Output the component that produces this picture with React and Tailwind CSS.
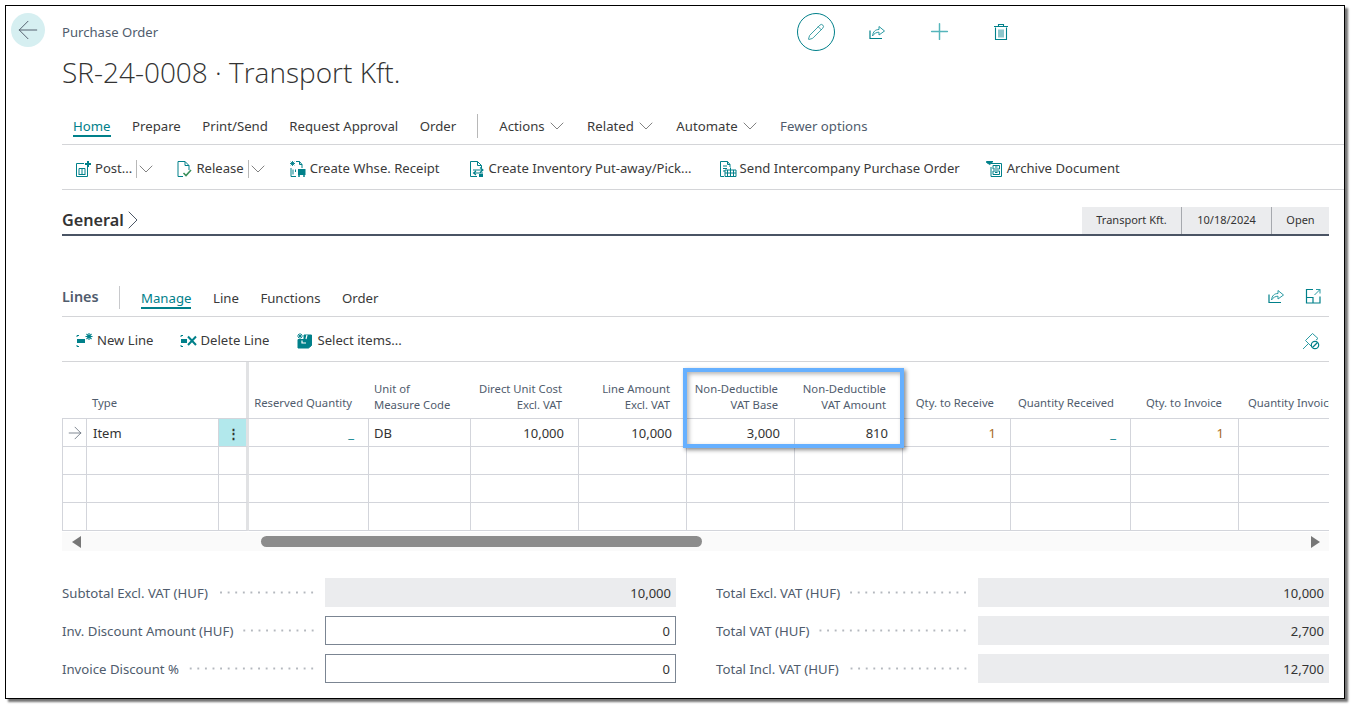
import { ChevronDown, ChevronRight, ArrowLeft, ArrowRight, Plus, Pencil } from 'lucide-react'

const teal = '#00808a'

// 18x18 hand drawn toolbar icons
const Svg = ({ size = 18, children }) => (
  <svg width={size} height={size} viewBox="0 0 18 18" fill="none" stroke={teal} strokeWidth="1" className="shrink-0">
    {children}
  </svg>
)

const PostIcon = () => (
  <Svg>
    <path d="M10 3.5H2.5V16.5H13.5V7" />
    <path d="M5 8.5V14M8 8.5V14M11 8.5V14M5 8.5H11M4.5 14.5H11.5" />
    <path d="M14 1V7M11 4H17" strokeWidth="2" />
  </Svg>
)
const ReleaseIcon = () => (
  <Svg>
    <path d="M3 16.5V1.5H10L14 5.5V10M10 1.5V5.5H14M3 16.5H8" />
    <path d="M8.5 13L11 15.5L16 10" strokeWidth="1.6" stroke="#3a8f5a" />
  </Svg>
)
const WhseIcon = () => (
  <Svg>
    <path d="M3.5 1V6M1 3.5H6M1.7 1.7L5.3 5.3M5.3 1.7L1.7 5.3" strokeWidth="0.9" />
    <path d="M7 1.5H10.5L13 4.5V8M10.5 1.5V4.5H13M2 8V16.5H7" />
    <path d="M4 9.5V14.5M6.5 9.5V12" />
    <rect x="9" y="9" width="7.5" height="6" fill={teal} stroke="none" />
    <circle cx="10" cy="16" r="1" fill={teal} stroke="none" />
    <circle cx="15" cy="16" r="1" fill={teal} stroke="none" />
  </Svg>
)
const InventoryIcon = () => (
  <Svg>
    <path d="M2.5 16.5V1.5H9.5L13.5 5.5V8M9.5 1.5V5.5H13.5M2.5 16.5H9" />
    <path d="M5 10H15M12 7.5L15 10L12 12.5M15 13H6M8 11L5.5 13L8 15" strokeWidth="1.1" />
    <rect x="11" y="14" width="4" height="3" fill={teal} stroke="none" />
  </Svg>
)
const IntercompanyIcon = () => (
  <Svg>
    <path d="M1.5 16.5V1.5H8.5L11 4.5V7M8.5 1.5V4.5H11M1.5 16.5H5" />
    <path d="M4 6H8M4 8.5H8M4 11H6" />
    <path d="M6 16.5V10H17V16.5Z M8.5 10V16.5M11.5 7.5V16.5M14.5 10V16.5M6 13H17" />
  </Svg>
)
const ArchiveIcon = () => (
  <Svg>
    <path d="M5 3.5H15.5V16.5H5V7" />
    <path d="M7 5.5H13.5V9H7ZM7 11H13.5V14.5H7Z" />
    <path d="M9 7H11.5M9 12.5H11.5" />
    <path d="M0.5 1.5H7L3.8 4.5L0.5 2.5Z" fill={teal} stroke={teal} />
  </Svg>
)
const NewLineIcon = () => (
  <Svg>
    <path d="M1 5V3.5H3M1 13V14.5H3" />
    <rect x="1" y="7" width="8" height="4" fill={teal} stroke="none" />
    <path d="M13 1V8M9.5 4.5H16.5M10.5 2L15.5 7M15.5 2L10.5 7" strokeWidth="1.1" />
  </Svg>
)
const DeleteLineIcon = () => (
  <Svg>
    <path d="M1 5V3.5H3M1 13V14.5H3" />
    <rect x="1" y="7" width="6" height="4" fill={teal} stroke="none" />
    <path d="M8 4.5L16 13M16 4.5L8 13" strokeWidth="2" />
  </Svg>
)
const SelectIcon = () => (
  <Svg>
    <path d="M2 7.5H8V3H15.5V13.5L12.5 16H2Z" fill={teal} />
    <path d="M6 8.5V11H10" stroke="#fff" strokeWidth="1.2" />
    <path d="M11 3L10 7" stroke="#fff" strokeWidth="1.2" />
    <path d="M4 1V7M1 4H7M2 2L6 6M6 2L2 6" strokeWidth="0.9" />
  </Svg>
)
const ShareIcon = ({ size = 18 }) => (
  <Svg size={size}>
    <path d="M2 7.5V15.5H14" strokeWidth="1.2" />
    <path d="M4.5 13C5 8.5 7.5 6.5 11 6.5V3.5L16.5 8L11 12V9.2C8.5 9.2 6 10.5 4.5 13Z" stroke="#2a9aa3" />
  </Svg>
)
const TrashIcon = () => (
  <Svg>
    <path d="M3.5 4.5V16.5H14.5V4.5M2 3.5H16M6.5 3.5V1.5H11.5V3.5" strokeWidth="1.1" />
    <path d="M7 6.5V14.5M9 6.5V14.5M11 6.5V14.5" strokeWidth="0.9" />
  </Svg>
)
const ExpandIcon = () => (
  <Svg>
    <path d="M9 2.5H2.5V16H16V9.5" strokeWidth="1.2" />
    <path d="M2.5 10.5H9V16" strokeWidth="1.2" />
    <path d="M10.5 8L16 2.5M12 2.5H16V6.5" stroke="#2a9aa3" />
  </Svg>
)
const PinIcon = () => (
  <Svg>
    <path d="M1 17L6 12M3.5 8.5L10 2L10.5 1.5L16 6.5L14 8" stroke="#2a9aa3" />
    <path d="M3.5 8.5L9 14" stroke="#2a9aa3" />
    <circle cx="13" cy="13" r="3.7" strokeWidth="1.2" />
    <path d="M10.5 15.5L15.5 10.5" strokeWidth="1.2" />
  </Svg>
)

const Tab = ({ children, active }) => (
  <div className={`h-[22px] leading-[23px] text-[13.2px] ${active ? 'text-[#00808a] border-b-2 border-[#00808a]' : 'text-[#3a3a3a]'}`}>
    {children}
  </div>
)

const MenuTab = ({ children }) => (
  <div className="flex items-center h-[22px] text-[13.2px] text-[#3a3a3a] leading-[23px]">
    {children}
    <ChevronDown size={24} strokeWidth={0.85} className="text-[#6b6b6b]" />
  </div>
)

const ToolButton = ({ icon, children, className = '' }) => (
  <div className={`flex items-center gap-[3px] text-[#3a3a3a] ${className}`}>
    {icon}
    <span>{children}</span>
  </div>
)

const Splitter = () => (
  <div className="flex items-center">
    <div className="w-px h-[18px] bg-[#b8b8b8] ml-[4px] -mr-[3px]" />
    <ChevronDown size={24} strokeWidth={0.85} className="text-[#6b6b6b]" />
  </div>
)

const gridCols =
  'grid grid-cols-[25px_132px_30px_120px_102px_108px_108px_108px_108px_108px_120px_108px_90px]'

const headers = [
  { text: '', cls: '' },
  { text: 'Type', cls: 'pl-[5px]' },
  { text: '', cls: 'border-r-[3px] border-[#e1e2e4]' },
  { text: 'Reserved Quantity', cls: 'justify-end text-right pr-[17px]' },
  { text: 'Unit of\nMeasure Code', cls: 'pl-[5px]' },
  { text: 'Direct Unit Cost\nExcl. VAT', cls: 'justify-end text-right pr-[17px]' },
  { text: 'Line Amount\nExcl. VAT', cls: 'justify-end text-right pr-[17px]' },
  { text: 'Non-Deductible\nVAT Base', cls: 'justify-end text-right pr-[17px]' },
  { text: 'Non-Deductible\nVAT Amount', cls: 'justify-end text-right pr-[17px]' },
  { text: 'Qty. to Receive', cls: 'justify-end text-right pr-[17px]' },
  { text: 'Quantity Received', cls: 'justify-end text-right pr-[17px]' },
  { text: 'Qty. to Invoice', cls: 'justify-end text-right pr-[17px]' },
  { text: 'Quantity Invoiced', cls: 'pl-[9px] overflow-hidden' },
]

const cellBase = 'h-[28px] border-r border-b border-[#d3d5db] flex items-center px-[6px] pt-[2px] text-[13px] text-[#333]'

const DataRow = ({ first }) => {
  const v = (value, extra = '') => (first ? <span className={extra}>{value}</span> : null)
  return (
    <div className={`${gridCols} h-[28px]`}>
      <div className={`${cellBase} border-l justify-center !px-0 !pt-0`}>
        {first && <ArrowRight size={20} strokeWidth={0.85} className="text-[#4d5866]" />}
      </div>
      <div className={cellBase}>{v('Item')}</div>
      <div className={`${cellBase} justify-center !px-0 !pl-[1px] border-r-[3px] !border-r-[#e1e2e4] ${first ? 'bg-[#b2e8ec]' : ''}`}>
        {first && <span className="font-bold leading-none">⋮</span>}
      </div>
      <div className={`${cellBase} justify-end !pr-[14px]`}>{v('_', 'text-[#00808a]')}</div>
      <div className={`${cellBase} !pl-[5px]`}>{v('DB')}</div>
      <div className={`${cellBase} justify-end !pr-[14px]`}>{v('10,000')}</div>
      <div className={`${cellBase} justify-end !pr-[14px]`}>{v('10,000')}</div>
      <div className={`${cellBase} justify-end !pr-[14px]`}>{v('3,000')}</div>
      <div className={`${cellBase} justify-end !pr-[14px]`}>{v('810')}</div>
      <div className={`${cellBase} justify-end !pr-[14px]`}>{v('1', 'text-[#a86a1a]')}</div>
      <div className={`${cellBase} justify-end !pr-[14px]`}>{v('_', 'text-[#00808a]')}</div>
      <div className={`${cellBase} justify-end !pr-[14px]`}>{v('1', 'text-[#a86a1a]')}</div>
      <div className={`${cellBase} !border-r-0`} />
    </div>
  )
}

const Total = ({ label, value, input }) => (
  <div className="flex items-center h-[29px]">
    <span className="whitespace-nowrap text-[#505c6d] text-[13.2px] pt-[2px]">{label}</span>
    <div className="flex-1 h-[3px] ml-[9px] mr-[9px] bg-[radial-gradient(circle,#b4b8be_1px,transparent_1.2px)] bg-[length:7.6px_3px] bg-repeat-x bg-right" />
    <div
      className={`w-[351px] h-[29px] flex items-center justify-end pr-[5px] pt-[2px] text-[#333] text-[13px] ${
        input ? 'border border-[#7b8592] bg-white' : 'bg-[#ebecee]'
      }`}
    >
      {value}
    </div>
  </div>
)

export default function App() {
  return (
    <div className="h-[705px] w-[1351px] bg-white pl-[5px] pt-[5px] font-['Noto_Sans','Open_Sans',sans-serif] text-[13.1px] overflow-hidden">
      <div className="relative w-[1340px] h-[694px] border border-black shadow-[3px_3px_2px_rgba(0,0,0,0.55)] bg-white flex flex-col">
        {/* page header */}
        <div className="flex h-[102px] shrink-0">
          <div className="ml-[5px] mt-[7px] w-[34px] h-[34px] rounded-full bg-[#d6eff1] flex items-center justify-center shrink-0">
            <ArrowLeft size={30} strokeWidth={0.75} className="text-[#4d5866]" />
          </div>
          <div className="ml-[17px] w-[735px] shrink-0">
            <div className="mt-[17px] text-[#505c6d] leading-[18px]">Purchase Order</div>
            <div className="mt-[12px] font-['Open_Sans',sans-serif] text-[28px] font-light leading-[38px] text-[#333]">SR-24-0008 · Transport Kft.</div>
          </div>
          <div className="flex items-start">
            <div className="mt-[7px] w-[38px] h-[38px] rounded-full border border-[#00808a] flex items-center justify-center">
              <Pencil size={18} strokeWidth={1} className="text-[#00808a]" />
            </div>
            <div className="ml-[33px] mt-[17px]"><ShareIcon /></div>
            <div className="ml-[40px] mt-[12px]"><Plus size={27} strokeWidth={1.3} className="text-[#55b5bb]" /></div>
            <div className="ml-[39px] mt-[17px]"><TrashIcon /></div>
          </div>
        </div>

        {/* action bar */}
        <div className="flex items-center h-[37px] ml-[56px] pl-[11px] border-b border-[#d4d5d8] shrink-0">
          <div className="flex items-center gap-[21.5px]">
            <Tab active>Home</Tab>
            <Tab>Prepare</Tab>
            <Tab>Print/Send</Tab>
            <Tab>Request Approval</Tab>
            <Tab>Order</Tab>
          </div>
          <div className="w-px h-[24px] bg-[#b8b8b8] mx-[21px]" />
          <div className="flex items-center gap-[18.5px]">
            <MenuTab>Actions</MenuTab>
            <MenuTab>Related</MenuTab>
            <MenuTab>Automate</MenuTab>
            <div className="text-[#505c6d] text-[13.2px] leading-[23px]">Fewer options</div>
          </div>
        </div>
        <div className="flex items-center h-[45px] ml-[56px] pl-[12px] pt-[4px] border-b border-[#d4d5d8] shrink-0">
          <ToolButton icon={<PostIcon />}>Post...</ToolButton>
          <Splitter />
          <ToolButton icon={<ReleaseIcon />} className="ml-[17px]">Release</ToolButton>
          <Splitter />
          <ToolButton icon={<WhseIcon />} className="ml-[19px]">Create Whse. Receipt</ToolButton>
          <ToolButton icon={<InventoryIcon />} className="ml-[28px]">Create Inventory Put-away/Pick...</ToolButton>
          <ToolButton icon={<IntercompanyIcon />} className="ml-[27px]">Send Intercompany Purchase Order</ToolButton>
          <ToolButton icon={<ArchiveIcon />} className="ml-[26px]">Archive Document</ToolButton>
        </div>

        {/* General fast tab */}
        <div className="flex items-end h-[46px] ml-[56px] mr-[15px] border-b-2 border-[#4a5464] shrink-0">
          <div className="flex items-center h-[27px] text-[16.2px] font-semibold text-[#333] leading-[24px] mb-[1px]">
            General
            <ChevronRight size={32} strokeWidth={0.75} className="text-[#4d5866] -ml-[7px]" />
          </div>
          <div className="ml-auto flex h-[27px] text-[11px] text-[#333]">
            <div className="w-[100px] flex items-center justify-center bg-[#ebecee] border-r border-[#a6a9ae]">Transport Kft.</div>
            <div className="w-[90px] flex items-center justify-center bg-[#ebecee] border-r border-[#a6a9ae]">10/18/2024</div>
            <div className="w-[57px] flex items-center justify-center bg-[#ebecee]">Open</div>
          </div>
        </div>

        {/* Lines part */}
        <div className="flex items-center h-[47px] mt-[34px] ml-[56px] mr-[15px] border-b border-[#d4d5d8] shrink-0 pt-[9px]">
          <div className="w-[37px] text-[14.4px] font-semibold text-[#505c6d] -mt-[1px]">Lines</div>
          <div className="w-px h-[23px] bg-[#c8c9cc] ml-[20px] mr-[21px]" />
          <div className="flex items-center gap-[21.5px]">
            <Tab active>Manage</Tab>
            <Tab>Line</Tab>
            <Tab>Functions</Tab>
            <Tab>Order</Tab>
          </div>
          <div className="ml-auto flex items-center gap-[19px] mr-[7px] mb-[3px]">
            <ShareIcon />
            <ExpandIcon />
          </div>
        </div>
        <div className="flex items-center h-[45px] ml-[56px] mr-[15px] pl-[14px] pt-[4px] border-b border-[#d4d5d8] shrink-0">
          <ToolButton icon={<NewLineIcon />}>New Line</ToolButton>
          <ToolButton icon={<DeleteLineIcon />} className="ml-[26px]">Delete Line</ToolButton>
          <ToolButton icon={<SelectIcon />} className="ml-[27px]">Select items...</ToolButton>
          <div className="ml-auto mr-[9px]"><PinIcon /></div>
        </div>

        {/* lines grid */}
        <div className="ml-[56px] w-[1267px] shrink-0">
          <div className={`${gridCols} h-[57px] border-b border-[#d3d5db]`}>
            {headers.map((h, i) => (
              <div
                key={i}
                className={`flex items-end text-[11.3px] leading-[16px] text-[#505c6d] whitespace-pre ${
                  h.text.includes('\n') ? 'pb-[5px]' : 'pb-[7px]'
                } ${h.cls}`}
              >
                {h.text}
              </div>
            ))}
          </div>
          <DataRow first />
          <DataRow />
          <DataRow />
          <DataRow />
          <div className="flex items-center h-[19px] bg-[#fafafa] mt-px pl-[10px] pr-[9px]">
            <div className="w-0 h-0 border-y-[6px] border-y-transparent border-r-[9px] border-r-[#777]" />
            <div className="ml-[180px] w-[441px] h-[11px] rounded-full bg-[#8c8c8c]" />
            <div className="ml-auto w-0 h-0 border-y-[6px] border-y-transparent border-l-[9px] border-l-[#777]" />
          </div>
        </div>

        {/* totals */}
        <div className="grid grid-cols-[614px_613px] gap-x-[40px] ml-[56px] mt-[27px] shrink-0">
          <div className="flex flex-col gap-[9px]">
            <Total label="Subtotal Excl. VAT (HUF)" value="10,000" />
            <Total label="Inv. Discount Amount (HUF)" value="0" input />
            <Total label="Invoice Discount %" value="0" input />
          </div>
          <div className="flex flex-col gap-[9px]">
            <Total label="Total Excl. VAT (HUF)" value="10,000" />
            <Total label="Total VAT (HUF)" value="2,700" />
            <Total label="Total Incl. VAT (HUF)" value="12,700" />
          </div>
        </div>

        {/* highlight around the non-deductible columns */}
        <div className="absolute left-[677px] top-[362px] w-[221px] h-[80px] border-[4px] border-[#66b0ff] shadow-[2px_2px_4px_rgba(0,0,0,0.45),inset_2px_2px_4px_rgba(0,0,0,0.3)]" />
      </div>
    </div>
  )
}
